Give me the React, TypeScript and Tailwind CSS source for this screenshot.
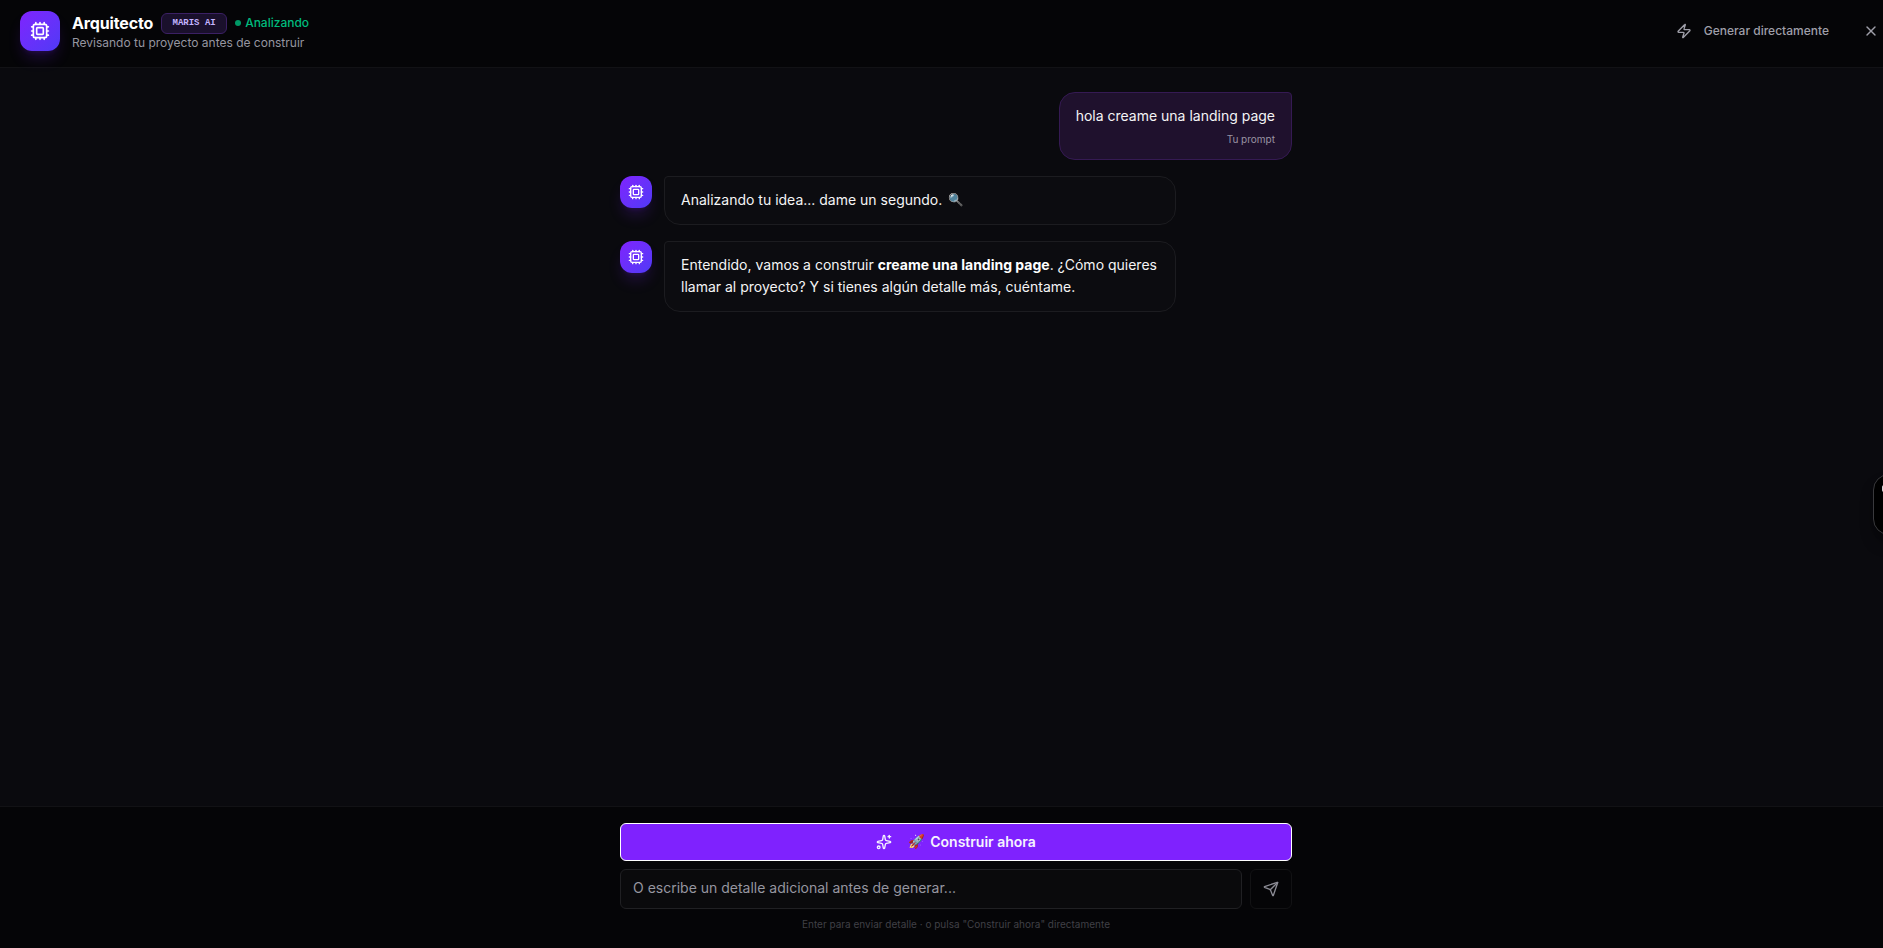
import { useState, type ReactNode } from 'react';
import { Cpu, Send, Sparkles, X, Zap } from 'lucide-react';

interface Message {
  id: number;
  role: 'user' | 'architect';
  content: ReactNode;
}

const messages: Message[] = [
  { id: 1, role: 'user', content: 'hola creame una landing page' },
  {
    id: 2,
    role: 'architect',
    content: (
      <>
        Analizando tu idea... dame un segundo. <span className="ml-0.5 align-[1px] text-[12.5px] leading-none">🔍</span>
      </>
    ),
  },
  {
    id: 3,
    role: 'architect',
    content: (
      <>
        Entendido, vamos a construir <strong className="font-bold text-white">creame una landing page</strong>. ¿Cómo quieres
        llamar al proyecto? Y si tienes algún detalle más, cuéntame.
      </>
    ),
  },
];

function Header() {
  return (
    <header className="flex h-[68px] shrink-0 items-start justify-between border-b border-[#121215] bg-[#050507] pt-[11px] pl-5 pr-1">
      <div className="flex items-start gap-3">
        <div className="flex h-10 w-10 items-center justify-center rounded-xl bg-gradient-to-br from-[#7f22fe] to-[#4f39f6] shadow-lg shadow-[#7f22fe]/20">
          <Cpu className="h-5 w-5 text-white" />
        </div>
        <div className="pt-0.5">
          <div className="flex h-[21px] items-center gap-2">
            <h1 className="text-base leading-[21px] font-bold tracking-[-0.15px] text-white">Arquitecto</h1>
            <span className="flex h-[21px] w-[66px] items-center justify-center rounded-md border border-[#3b2064] bg-[#1a102c] font-['Liberation_Mono',monospace] text-[9px] font-bold text-[#c4b4ff]">
              MARIS AI
            </span>
            <span className="flex items-center gap-1 text-xs leading-[14px] font-medium text-[#00bc7d]">
              <span className="-mt-px h-1.5 w-1.5 rounded-full bg-[#009966]" />
              <span className="-mt-px">Analizando</span>
            </span>
          </div>
          <p className="text-xs leading-[18px] text-[#9696a0]">Revisando tu proyecto antes de construir</p>
        </div>
      </div>
      <div className="flex h-10 items-center">
        <button className="flex items-center gap-3 text-xs font-medium text-[#9f9fa9]">
          <Zap className="h-4 w-4" />
          Generar directamente
        </button>
        <button className="ml-8.5 text-[#9f9fa9]" aria-label="Cerrar">
          <X className="h-4 w-4" />
        </button>
      </div>
    </header>
  );
}

function MessageRow({ message }: { message: Message }) {
  if (message.role === 'user') {
    return (
      <div className="flex justify-end">
        <div className="rounded-2xl rounded-tr-sm border border-[#351a53] bg-[#1f112d] px-4 py-3">
          <p className="text-sm leading-relaxed text-[#f4f4f5]">{message.content}</p>
          <p className="mt-1 text-right text-[10px] leading-[15px] text-[#9a93a3]">Tu prompt</p>
        </div>
      </div>
    );
  }

  return (
    <div className="flex items-start gap-3">
      <div className="flex h-8 w-8 shrink-0 items-center justify-center rounded-xl bg-gradient-to-br from-[#7f22fe] to-[#4f39f6] shadow-lg shadow-[#7f22fe]/20">
        <Cpu className="h-4 w-4 text-white" />
      </div>
      <div className="w-[512px] rounded-2xl rounded-tl-sm border border-[#1c1c20] bg-[#0c0c10] px-4 py-3">
        <p className="text-sm leading-relaxed text-[#f4f4f5]">{message.content}</p>
      </div>
    </div>
  );
}

export default function App() {
  const [detail, setDetail] = useState('');

  return (
    <div className="relative flex h-screen flex-col overflow-hidden bg-[#0a0a0e] font-['Inter',sans-serif]">
      <Header />

      {/* Conversation */}
      <main className="flex-1 overflow-hidden pt-6 pl-[29px]">
        <div className="mx-auto flex w-full max-w-2xl flex-col gap-4">
          {messages.map((message) => (
            <MessageRow key={message.id} message={message} />
          ))}
        </div>
      </main>

      {/* Composer */}
      <footer className="h-[142px] shrink-0 border-t border-[#121215] bg-[#050507] pt-4 pl-[29px]">
        <div className="mx-auto w-full max-w-2xl">
          <button className="flex h-[38px] w-full items-center justify-center gap-4 rounded-md border border-white bg-[#7f22fe] text-sm font-semibold text-[#f5f3ff]">
            <Sparkles className="h-4 w-4" />
            <span className="flex items-center gap-[5px]">
              <span className="text-[13.5px]">🚀</span>
              Construir ahora
            </span>
          </button>
          <div className="mt-2 flex gap-2">
            <input
              value={detail}
              onChange={(e) => setDetail(e.target.value)}
              placeholder="O escribe un detalle adicional antes de generar..."
              className="h-10 min-w-0 flex-1 rounded-md border border-[#202023] bg-[#0a0a0c] px-3 pb-[3px] text-sm text-white outline-none placeholder:text-[#9696a0]"
            />
            <button className="flex h-10 w-[42px] items-center justify-center rounded-md border border-[#121214] text-[#8b8b94]" aria-label="Enviar">
              <Send className="h-4 w-4" />
            </button>
          </div>
          <p className="mt-2 text-center text-[10px] leading-[15px] text-[#404046]">
            Enter para enviar detalle · o pulsa "Construir ahora" directamente
          </p>
        </div>
      </footer>

      {/* Docked side widget, mostly off screen */}
      <div className="absolute top-[474px] -right-[51px] h-[61px] w-[61px] rounded-2xl border border-[#39393c] bg-black pt-2.5 pl-2 shadow-lg shadow-black/40">
        <div className="h-[7px] w-8 rounded-xs bg-[#d4d4d8]" />
      </div>
    </div>
  );
}
